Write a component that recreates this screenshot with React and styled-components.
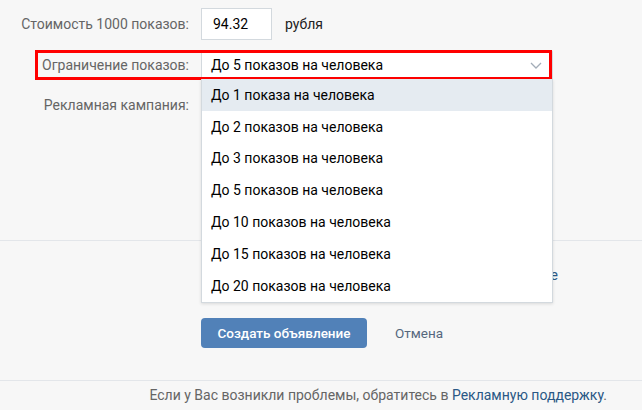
import React from "react";
import styled, { createGlobalStyle } from "styled-components";

const GlobalStyle = createGlobalStyle`
  html, body {
    margin: 0;
    padding: 0;
    background: #f7f7f7;
  }
  body {
    font-family: Roboto, "Open Sans", "Liberation Sans", sans-serif;
    font-size: 14px;
    color: #000;
    overflow: hidden;
  }
`;

const Page = styled.div`
  width: 642px;
  height: 410px;
  position: relative;
  overflow: hidden;
`;

const FormSection = styled.div`
  height: 241px;
  box-sizing: border-box;
  padding-top: 8px;
  border-bottom: 1px solid #e3e6ea;
  display: flex;
  flex-direction: column;
  gap: 10px;
`;

const Row = styled.div`
  display: grid;
  grid-template-columns: 189px auto;
  column-gap: 12px;
  align-items: center;
  position: relative;
  height: ${props => props.height || "30px"};
`;

const Label = styled.div`
  text-align: right;
  color: #656565;
  font-size: 14px;
`;

const Field = styled.div`
  display: flex;
  align-items: center;
  gap: 13px;
`;

const Input = styled.div`
  width: 71px;
  height: 32px;
  box-sizing: border-box;
  border: 1px solid #d3d9de;
  background: #fff;
  padding: 0 11px;
  display: flex;
  align-items: center;
  font-size: 14px;
  color: #000;
`;

const Unit = styled.span`
  color: #222;
`;

const Select = styled.div`
  width: 352px;
  height: 30px;
  box-sizing: border-box;
  border: 1px solid #d3d9de;
  border-radius: 2px 2px 0 0;
  background: #fff;
  padding: 0 10px 0 9px;
  display: flex;
  align-items: center;
  justify-content: space-between;
  font-size: 14px;
  color: #000;
`;

const Highlight = styled.div`
  position: absolute;
  left: 35px;
  top: 0;
  width: 517px;
  height: 30px;
  box-sizing: border-box;
  border: 3px solid #ff0000;
  pointer-events: none;
`;

const Dropdown = styled.ul`
  position: absolute;
  left: 201px;
  top: 79px;
  width: 352px;
  margin: 0;
  padding: 0;
  list-style: none;
  background: #fff;
  border: 1px solid #d3d9de;
  border-top: none;
  box-sizing: border-box;
  box-shadow: 0 1px 3px rgba(0, 0, 0, 0.12);
  z-index: 2;
`;

const Option = styled.li`
  height: 31.8px;
  display: flex;
  align-items: center;
  padding-left: 9px;
  font-size: 14px;
  color: #000;
  background: ${props => (props.active ? "#e5ebf1" : "#fff")};
`;

const ActionSection = styled.div`
  height: 140px;
  box-sizing: border-box;
  border-bottom: 1px solid #e3e6ea;
  padding: 25px 0 0 201px;
`;

const Terms = styled.div`
  width: 357px;
  height: 52px;
  line-height: 19px;
  font-size: 14px;
  color: #656565;

  a {
    color: #2a5885;
    text-decoration: none;
  }
`;

const TermsLine = styled.div`
  white-space: nowrap;
  text-align: ${props => (props.justify ? "justify" : "left")};
  text-align-last: ${props => (props.justify ? "justify" : "auto")};
`;

const Buttons = styled.div`
  display: flex;
  align-items: center;
  gap: 28px;
`;

const PrimaryButton = styled.button`
  width: 166px;
  height: 30px;
  border: none;
  border-radius: 4px;
  background: #5181b8;
  color: #fff;
  font-family: inherit;
  font-size: 13.5px;
  font-weight: 500;
  padding: 0;
`;

const LinkButton = styled.span`
  color: #55677d;
  font-size: 13.5px;
`;

const Footer = styled.div`
  display: flex;
  justify-content: flex-end;
  padding: 6px 35px 0 0;
  color: #656565;
  font-size: 14px;

  a {
    color: #2a5885;
    text-decoration: none;
  }
`;

const Chevron = () => (
  <svg width="12" height="7" viewBox="0 0 12 7" fill="none">
    <path d="M1 1l5 5 5-5" stroke="#a3adb8" strokeWidth="1.3" />
  </svg>
);

const options = [1, 2, 3, 5, 10, 15, 20];

const App = () => {
  return (
    <Page>
      <GlobalStyle />
      <FormSection>
        <Row height="32px">
          <Label>Стоимость 1000 показов:</Label>
          <Field>
            <Input>94.32</Input>
            <Unit>рубля</Unit>
          </Field>
        </Row>
        <Row>
          <Label>Ограничение показов:</Label>
          <Select>
            <span>До 5 показов на человека</span>
            <Chevron />
          </Select>
          <Highlight />
        </Row>
        <Row>
          <Label>Рекламная кампания:</Label>
          <Select>
            <span>Новая кампания</span>
            <Chevron />
          </Select>
        </Row>
      </FormSection>

      <Dropdown>
        {options.map((n, index) => (
          <Option key={n} active={index === 0}>
            До {n} {n === 1 ? "показа" : "показов"} на человека
          </Option>
        ))}
      </Dropdown>

      <ActionSection>
        <Terms>
          <TermsLine justify>
            Создавая объявление, Вы <a href="#">принимаете</a>
          </TermsLine>
          <TermsLine>
            <a href="#">Правила размещения рекламы</a>.
          </TermsLine>
        </Terms>
        <Buttons>
          <PrimaryButton>Создать объявление</PrimaryButton>
          <LinkButton>Отмена</LinkButton>
        </Buttons>
      </ActionSection>

      <Footer>
        <span>
          Если у Вас возникли проблемы, обратитесь в{" "}
          <a href="#">Рекламную поддержку</a>.
        </span>
      </Footer>
    </Page>
  );
};

export default App;
